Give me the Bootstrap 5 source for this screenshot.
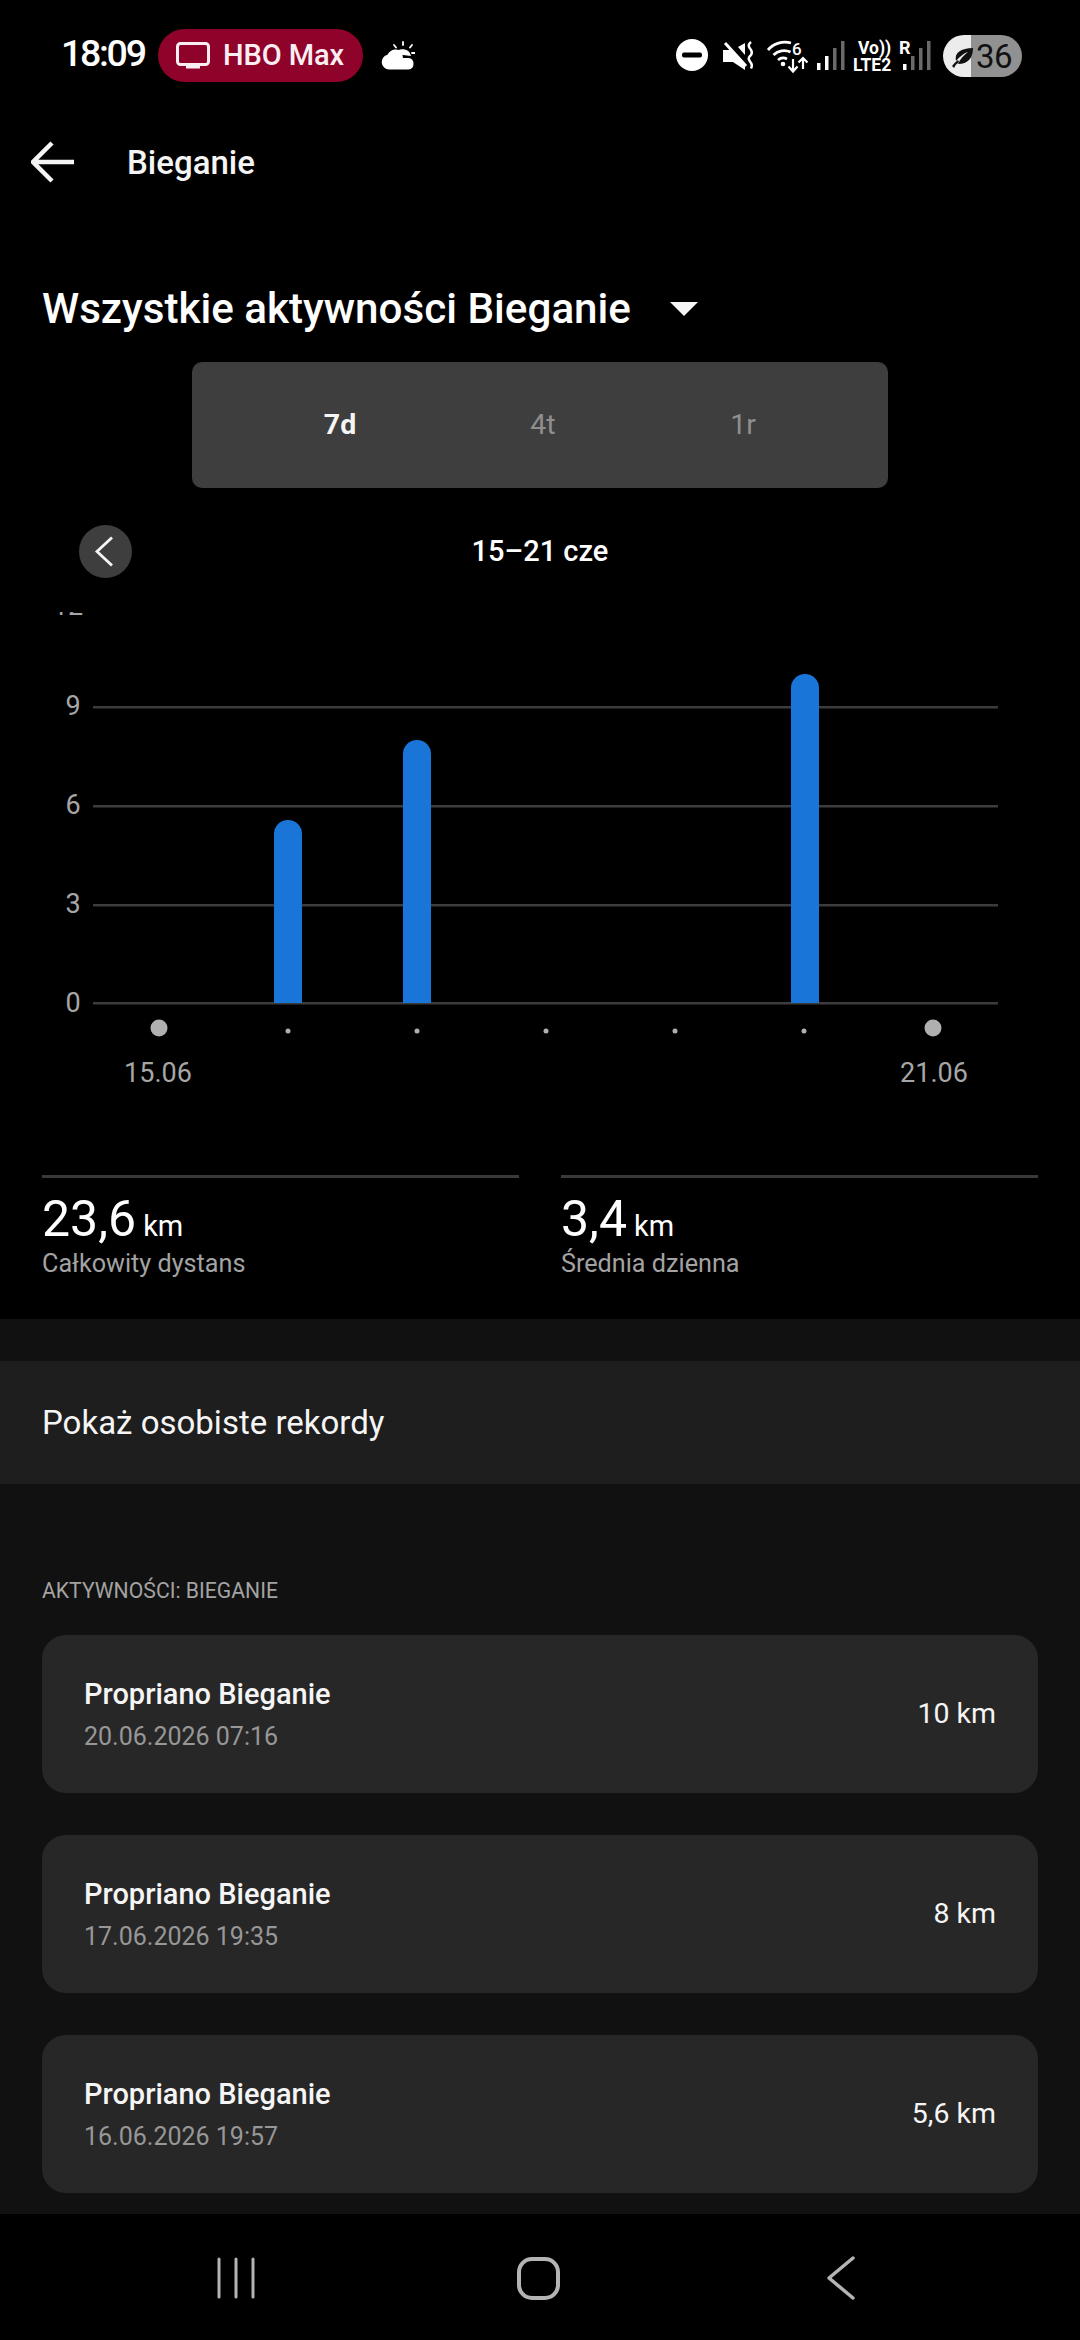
<!DOCTYPE html>
<html lang="pl">
<head>
<meta charset="utf-8">
<title>Bieganie</title>
<link href="https://cdn.jsdelivr.net/npm/bootstrap@5.3.0/dist/css/bootstrap.min.css" rel="stylesheet">
<style>
html,body{margin:0;background:#000;}
body{font-family:Roboto,"Noto Sans",sans-serif;color:#f5f5f5;width:1080px;height:2340px;overflow:hidden;}
.screen{width:1080px;height:2340px;}
.scroll-area{flex:1 1 0;overflow:hidden;min-height:0;}
.status-row{height:106px;padding:0 40px 0 61px;}
.clock{font-size:37.5px;font-weight:500;letter-spacing:-2.3px;width:97px;color:#fff;line-height:1;margin-top:1px;}
.app-pill{width:205px;height:53px;margin-top:5px;background:#8f0229;border-radius:27px;padding-left:18px;gap:13px;font-size:29px;font-weight:500;color:#fbeef2;letter-spacing:-.1px;}
.wx-icon{margin-left:18px;margin-top:5px;}
.app-bar{height:112px;padding-left:31px;gap:52px;}
.app-title{font-size:33px;font-weight:500;line-height:1;}
.heading-row{height:144px;padding:38px 0 0 42px;gap:39px;}
.heading-txt{font-size:42.2px;font-weight:500;line-height:1;color:#fff;}
.caret-down{width:0;height:0;border-left:14px solid transparent;border-right:14px solid transparent;border-top:14px solid #f5f5f5;}
.segment{width:696px;height:126px;margin-left:192px;background:#3e3e3e;border-radius:10px;font-size:28.5px;line-height:1;}
.seg-item{position:absolute;transform:translateX(-50%);color:#8e8e8e;}
.seg-on{color:#f5f5f5;font-weight:700;}
.date-row{height:53px;margin-top:37px;position:relative;}
.prev-btn{width:53px;height:53px;margin-left:79px;background:#3e3e3e;border-radius:50%;}
.prev-btn svg{margin-right:3px;}
.date-txt{position:absolute;left:0;right:0;top:0;line-height:52px;font-size:29px;font-weight:500;text-align:center;color:#fff;}
.chart-box{display:block;margin-top:22px;}
.chart-box text{font-family:Roboto,sans-serif;font-size:27px;fill:#a6a6a6;}
.stats{padding:75px 42px 0;gap:42px;height:219px;}
.stat{flex:1 1 0;border-top:3px solid #3a3a3a;padding-top:17px;}
.stat-val{font-size:50px;line-height:48px;color:#fff;}
.stat-unit{font-size:29px;margin-left:7px;}
.stat-lbl{font-size:25.200px;line-height:28px;color:#a3a3a3;margin-top:0;}
.lower{background:#111;padding-top:42px;}
.records{height:123px;background:#1e1e1e;padding-left:42px;font-size:33px;color:#f5f5f5;}
.act-head{font-size:21.200px;line-height:24px;color:#a3a3a3;padding:95px 42px 0;}
.act-list{padding:32px 42px 21px;gap:42px;}
.act-card{height:158px;background:#272727;border-radius:24px;padding:0 42px;}
.act-name{font-size:29px;font-weight:500;line-height:34px;color:#f5f5f5;}
.act-date{font-size:25px;line-height:30px;color:#979797;margin-top:11px;}
.act-dist{font-size:28.500px;color:#f5f5f5;}
.nav-strip{height:126px;flex:0 0 126px;background:#000;}
</style>
</head>
<body>
<div class="screen d-flex flex-column">
  <div class="scroll-area">
    <div class="status-row d-flex align-items-center">
      <span class="clock">18:09</span>
      <span class="app-pill d-flex align-items-center">
        <svg width="34" height="28" viewBox="0 0 34 28"><rect x="1.5" y="1.5" width="31" height="21" rx="3" fill="none" stroke="#fbeef2" stroke-width="3"/><rect x="10" y="23" width="14" height="3.500" fill="#fbeef2"/></svg>
        HBO Max
      </span>
      <svg class="wx-icon" width="34" height="30" viewBox="0 0 34 30">
        <g stroke="#fff" stroke-width="1.800" stroke-linecap="round"><path d="M22 1v3M13 4l2 2.500M31 4l-2 2.500M34 12h-3"/></g>
        <path d="M14 13a8.500 8.500 0 0 1 16 2z" fill="#fff"/>
        <path d="M8 28.500a7.500 7.500 0 0 1-1.500-14.800 9.500 9.500 0 0 1 15.500-2.200 7 7 0 0 0 0 5.500h5.500a5.800 5.800 0 0 1 0 11.500z" fill="#fff"/>
      </svg>
      <svg class="ms-auto" width="400" height="106" viewBox="640 0 400 106">
        <circle cx="692" cy="55" r="16" fill="#fff"/><rect x="682" y="52.500" width="20" height="5" rx="2" fill="#000"/>
        <path d="M723 50h9l13 15v5l-12-8h-10z" fill="#fff"/><path d="M738 47l7-4v12z" fill="#fff"/><path d="M725 43l21 23" stroke="#fff" stroke-width="3"/>
        <path d="M751 42q-4 3-1 6.500t1 6.500q-4 3-1 6.500t1 7" fill="none" stroke="#fff" stroke-width="2.500"/>
        <g fill="none" stroke="#fff" stroke-width="2.800"><path d="M768 50a22 22 0 0 1 23-7"/><path d="M773.500 55a15 15 0 0 1 17-3"/><path d="M778 60a8 8 0 0 1 9-1"/></g>
        <circle cx="783" cy="64" r="2.300" fill="#fff"/>
        <text x="792" y="55" font-family="Roboto,sans-serif" font-size="17" font-weight="500" fill="#fff">6</text>
        <g fill="none" stroke="#fff" stroke-width="2.200"><path d="M793 59v12M788.500 66.500l4.500 5 4.500-5"/><path d="M803 69v-11M798.500 62.500l4.500-4.500 4.500 4.500"/></g>
        <rect x="817" y="63" width="3.500" height="7" fill="#fff"/><rect x="825" y="56" width="3.500" height="14" fill="#fff"/><rect x="833" y="48" width="3.500" height="22" fill="#6a6a6a"/><rect x="841" y="41" width="3.500" height="29" fill="#6a6a6a"/>
        <text x="858" y="54" font-family="Roboto,sans-serif" font-size="17.500" font-weight="700" fill="#fff">Vo))</text>
        <text x="853" y="71" font-family="Roboto,sans-serif" font-size="17.500" font-weight="700" fill="#fff">LTE2</text>
        <text x="899" y="54" font-family="Roboto,sans-serif" font-size="18" font-weight="700" fill="#fff">R</text>
        <rect x="903" y="64" width="3.500" height="6" fill="#fff"/><rect x="911" y="56" width="3.500" height="14" fill="#6a6a6a"/><rect x="919" y="48" width="3.500" height="22" fill="#6a6a6a"/><rect x="927" y="41" width="3.500" height="29" fill="#6a6a6a"/>
        <path d="M971 35h-7a21 21 0 0 0 0 42h7z" fill="#ececec"/><path d="M971 35h30a21 21 0 0 1 0 42h-30z" fill="#919191"/>
        <path d="M956 61c-2-8 5-13 17-13 0 10-5 16-15 16 2-5 6-9 10-12-6 2-9 6-12 9zM952 66q2-3 6-6l1 2q-3 2-5 6z" fill="#111"/>
        <text x="976" y="68" font-family="Roboto,sans-serif" font-size="33" fill="#111" letter-spacing="-.5">36</text>
      </svg>
    </div>
    <div class="app-bar d-flex align-items-center">
      <svg width="44" height="42" viewBox="0 0 44 42"><path d="M43 21H4M21 2 2 21l19 19" fill="none" stroke="#f5f5f5" stroke-width="4.500"/></svg>
      <span class="app-title">Bieganie</span>
    </div>
    <div class="heading-row d-flex align-items-center">
      <span class="heading-txt">Wszystkie aktywności Bieganie</span>
      <span class="caret-down"></span>
    </div>
    <div class="segment position-relative d-flex align-items-center">
      <span class="seg-item seg-on" style="left:148px">7d</span>
      <span class="seg-item" style="left:351px">4t</span>
      <span class="seg-item" style="left:551px">1r</span>
    </div>
    <div class="date-row">
      <div class="prev-btn d-flex align-items-center justify-content-center">
        <svg width="20" height="31" viewBox="0 0 20 31"><path d="M18 1.500 3 15.500l15 14" fill="none" stroke="#f5f5f5" stroke-width="2.800"/></svg>
      </div>
      <div class="date-txt">15–21 cze</div>
    </div>
    <svg class="chart-box" width="1080" height="500" viewBox="0 600 1080 500">
      <defs><clipPath id="clipTop"><rect x="0" y="612" width="1080" height="500"/></clipPath></defs>
      <text x="68" y="615" text-anchor="middle" clip-path="url(#clipTop)">12</text>
      <g fill="#3c3c3c">
        <rect x="93" y="706" width="905" height="2.500"/><rect x="93" y="805" width="905" height="2.500"/><rect x="93" y="904" width="905" height="2.500"/><rect x="93" y="1002" width="905" height="2.500"/>
      </g>
      <text x="73" y="715" text-anchor="middle">9</text><text x="73" y="814" text-anchor="middle">6</text><text x="73" y="913" text-anchor="middle">3</text><text x="73" y="1012" text-anchor="middle">0</text>
      <g fill="#1976d8">
        <path d="M274 1003V834a14 14 0 0 1 28 0v169z"/><path d="M403 1003V754a14 14 0 0 1 28 0v249z"/><path d="M791 1003V688a14 14 0 0 1 28 0v315z"/>
      </g>
      <g fill="#b0b0b0">
        <circle cx="159" cy="1028" r="8.500"/><circle cx="933" cy="1028" r="8.500"/>
        <circle cx="288" cy="1031" r="2.500"/><circle cx="417" cy="1031" r="2.500"/><circle cx="546" cy="1031" r="2.500"/><circle cx="675" cy="1031" r="2.500"/><circle cx="804" cy="1031" r="2.500"/>
      </g>
      <text x="158" y="1082" text-anchor="middle">15.06</text><text x="934" y="1082" text-anchor="middle">21.06</text>
    </svg>
    <div class="stats d-flex">
      <div class="stat"><div class="stat-val">23,6<span class="stat-unit">km</span></div><div class="stat-lbl">Całkowity dystans</div></div>
      <div class="stat"><div class="stat-val">3,4<span class="stat-unit">km</span></div><div class="stat-lbl">Średnia dzienna</div></div>
    </div>
    <div class="lower">
      <div class="records d-flex align-items-center">Pokaż osobiste rekordy</div>
      <div class="act-head">AKTYWNOŚCI: BIEGANIE</div>
      <div class="act-list d-flex flex-column">
        <div class="act-card d-flex align-items-center justify-content-between"><div><div class="act-name">Propriano Bieganie</div><div class="act-date">20.06.2026 07:16</div></div><div class="act-dist">10 km</div></div>
        <div class="act-card d-flex align-items-center justify-content-between"><div><div class="act-name">Propriano Bieganie</div><div class="act-date">17.06.2026 19:35</div></div><div class="act-dist">8 km</div></div>
        <div class="act-card d-flex align-items-center justify-content-between"><div><div class="act-name">Propriano Bieganie</div><div class="act-date">16.06.2026 19:57</div></div><div class="act-dist">5,6 km</div></div>
      </div>
    </div>
  </div>
  <div class="nav-strip d-flex align-items-center position-relative">
    <svg width="1080" height="126" viewBox="0 2214 1080 126">
      <g fill="none" stroke="#b4b4b4" stroke-linecap="round">
        <path d="M219 2259v38M236 2259v38M253 2259v38" stroke-width="3"/>
        <rect x="519" y="2259" width="39" height="39" rx="13" stroke-width="4"/>
        <path d="M853 2258 829 2278l24 20" stroke-width="3.500" stroke-linejoin="round"/>
      </g>
    </svg>
  </div>
</div>
<script src="https://cdn.jsdelivr.net/npm/bootstrap@5.3.0/dist/js/bootstrap.bundle.min.js"></script>
</body>
</html>
